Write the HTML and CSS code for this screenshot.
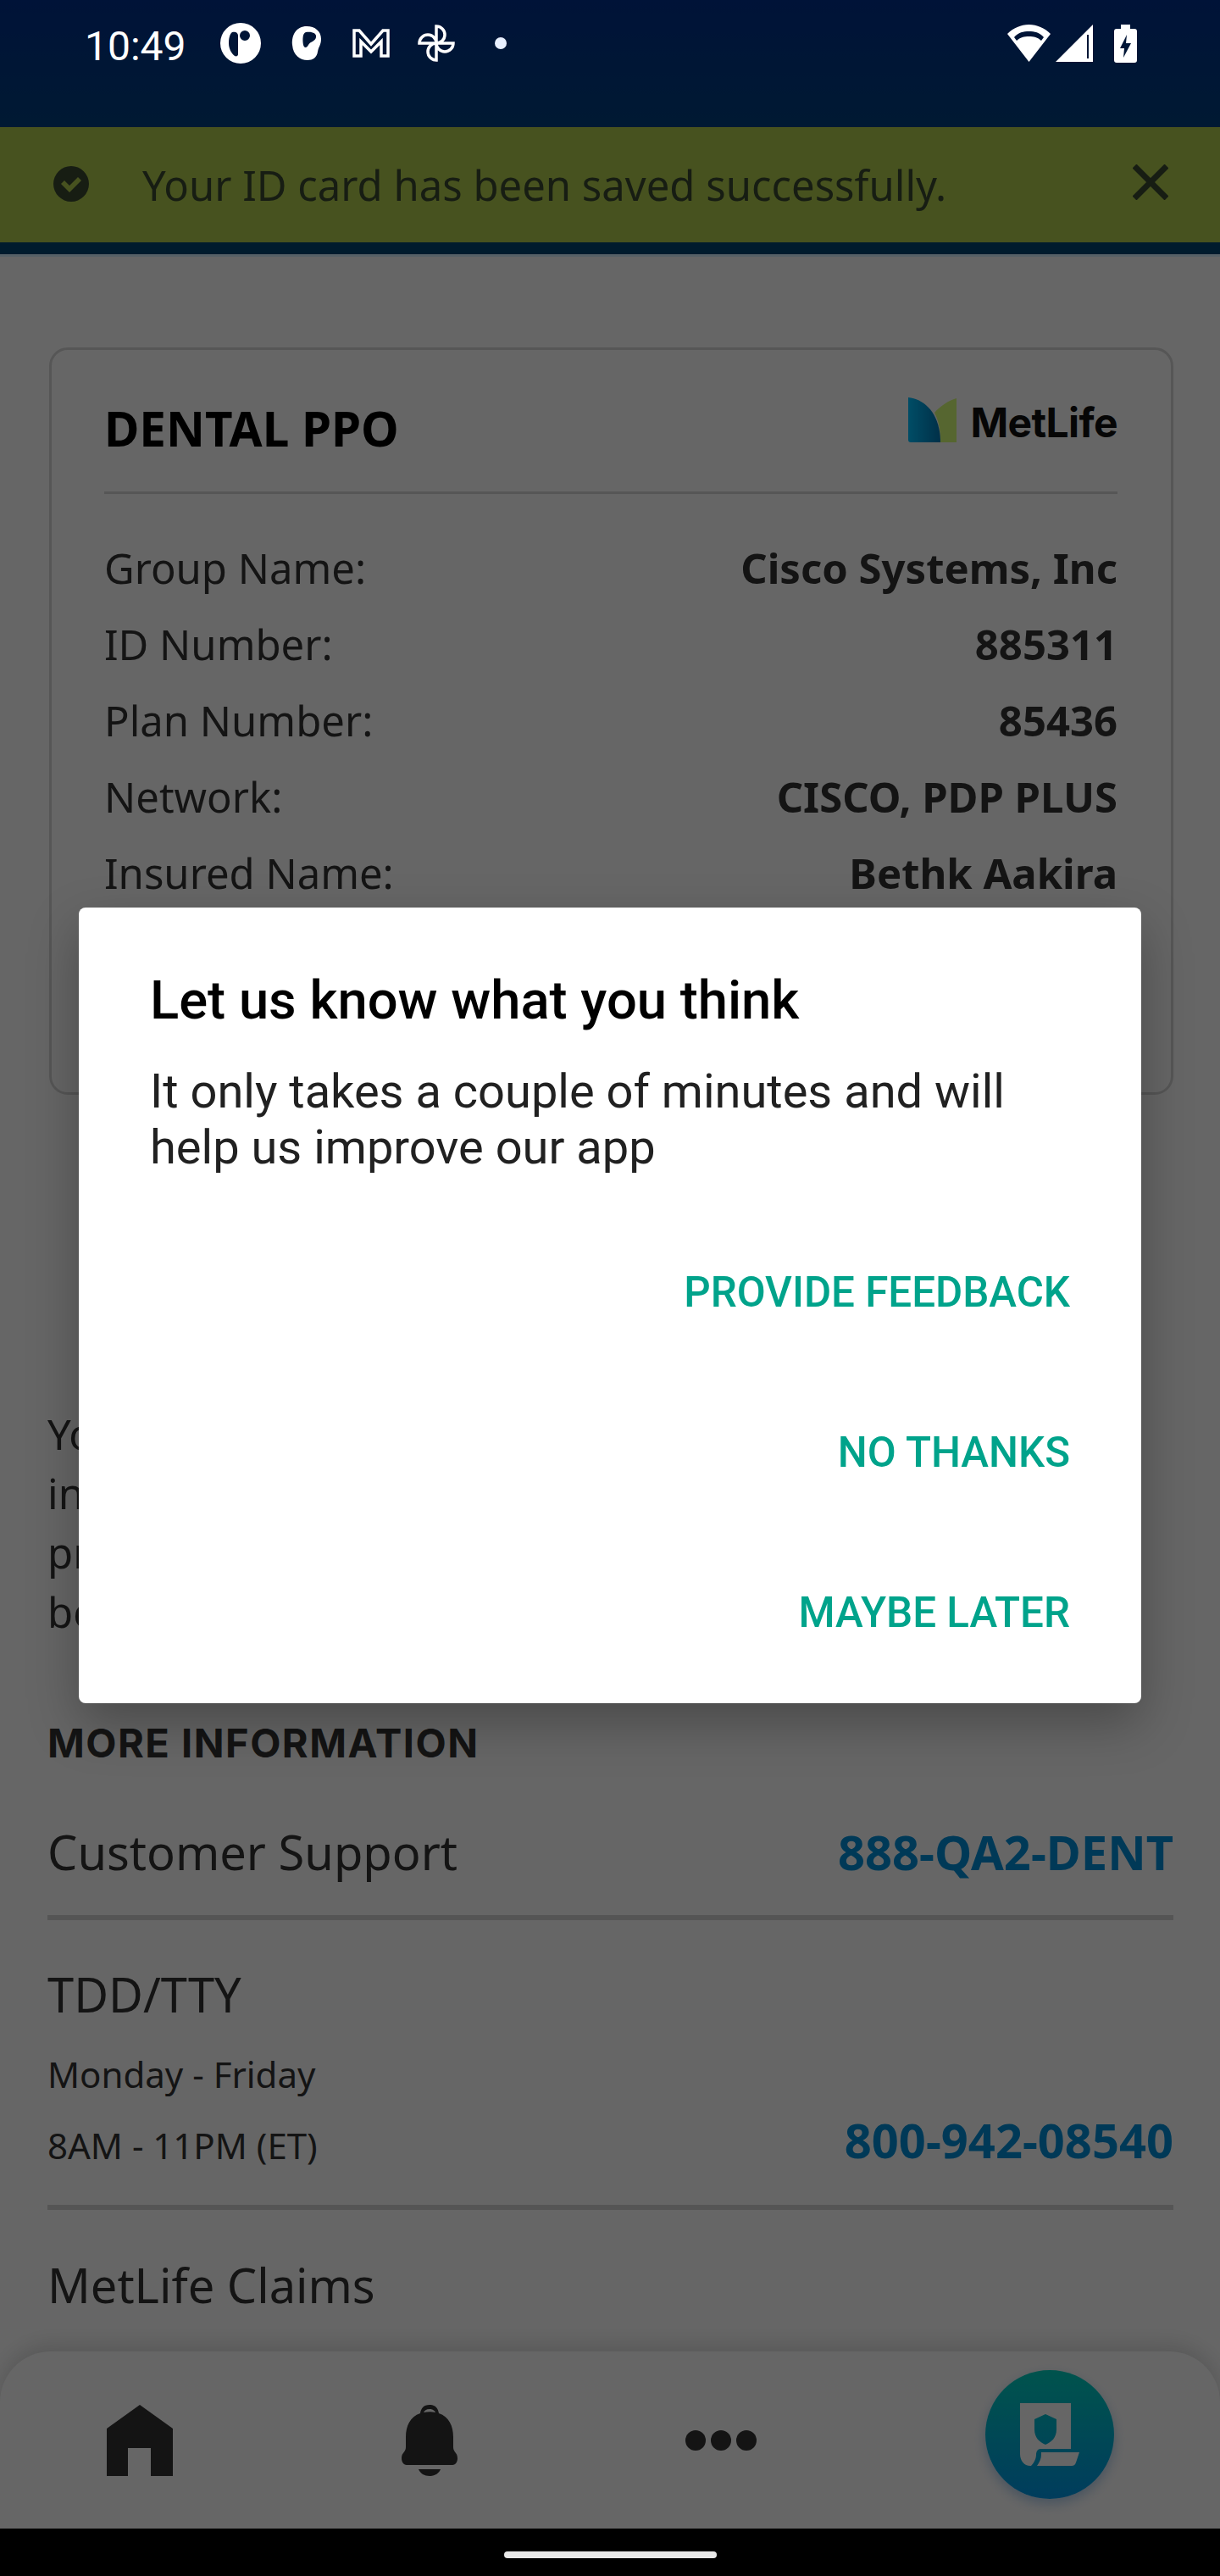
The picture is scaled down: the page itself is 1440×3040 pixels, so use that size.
FILE: index.html
```html
<!DOCTYPE html>
<html lang="en">
<head>
<meta charset="utf-8">
<title>ID card</title>
<link rel="stylesheet" href="styles.css">
</head>
<body>
<div class="phone">

	<div class="statusbar">
		<div class="statusLeft">
			<span class="clock">10:49</span>
			<svg class="appIcon" width="48" height="48" viewBox="0 0 48 48"><path fill-rule="evenodd" d="M24 0a24 24 0 1 0 0 48a24 24 0 1 0 0-48ZM14 11c3-1 7 0 7 4v22c0 2-2 3-4 2c-4-3-7-9-7-15c0-5 1-11 4-13ZM29 9a6 6 0 1 0 0 12a6 6 0 1 0 0-12Z"/></svg>
			<svg class="appIcon" width="36" height="40" viewBox="0 0 36 40"><path fill-rule="evenodd" d="M18 0C28 0 35 6 35 15C35 22 32 24 31 30C30 37 25 40 19 40C10 40 2 34 1 22C0 10 6 0 18 0ZM17 7C13 8 13 16 14 22C15 26 18 26 20 22C22 18 28 18 29 13C30 8 24 6 17 7Z"/></svg>
			<svg class="appIcon" width="44" height="34" viewBox="0 0 44 34"><path class="outline" d="M2 2H8L22 18L36 2H42V32H34V15L22 27L10 15V32H2Z"/></svg>
			<svg class="appIcon pinwheel" width="44" height="44" viewBox="0 0 44 44"><path class="outline" d="M22 22V2A10 10 0 0 1 22 22ZM22 22H42A10 10 0 0 1 22 22ZM22 22V42A10 10 0 0 1 22 22ZM22 22H2A10 10 0 0 1 22 22Z"/></svg>
			<span class="notifDot"></span>
		</div>
		<div class="statusRight">
			<svg class="appIcon" width="53" height="44" viewBox="0 0 53 44"><path fill-rule="evenodd" d="M26.5 44L1 11C8 4 17 0 26.5 0S45 4 52 11ZM9 15C14 9 20 8 26.5 8S39 9 44 15L41 19C37 15 32 14 26.5 14S16 15 12 19Z"/></svg>
			<svg class="appIcon" width="44" height="44" viewBox="0 0 44 44"><path fill-rule="evenodd" d="M44 0V44H0ZM37 12V40H39V12Z"/></svg>
			<svg class="appIcon battery" width="27" height="45" viewBox="0 0 27 45"><path fill-rule="evenodd" d="M8 0H19V5H24C26 5 27 6 27 8V42C27 44 26 45 24 45H3C1 45 0 44 0 42V8C0 6 1 5 3 5H8ZM15 12L7 28H12L11 39L20 22H14Z"/></svg>
		</div>
	</div>

	<div class="topbar"></div>

	<div class="successBanner">
		<svg class="bannerCheck" width="42" height="42" viewBox="0 0 42 42"><path fill-rule="evenodd" d="M21 0a21 21 0 1 0 0 42a21 21 0 1 0 0-42ZM9 21l4-4l6 6l10-10l4 4l-14 14Z"/></svg>
		<span class="bannerText">Your ID card has been saved successfully.</span>
		<svg class="bannerClose" width="42" height="42" viewBox="0 0 42 42"><path d="M2 2L40 40M40 2L2 40"/></svg>
	</div>
	<div class="bannerEdge"></div>

	<div class="content">
		<div class="idCard">
			<div class="idCardHead">
				<h2 class="idCardTitle">DENTAL PPO</h2>
				<div class="logo">
					<svg width="57" height="53" viewBox="0 0 57 53">
						<defs><linearGradient id="logoBlue" x1="0" y1="0" x2="1" y2="0"><stop offset="0" stop-color="#00c0ff"/><stop offset="1" stop-color="#0078b4"/></linearGradient></defs>
						<path fill="#d8ff78" d="M57 1V53H38C38 38 36 28 31 18C38 10 47 4 57 1Z"/>
						<path fill="url(#logoBlue)" d="M0 0C20 2 38 20 38 53H3Q0 53 0 50Z"/>
					</svg>
					<span class="logoText">MetLife</span>
				</div>
			</div>
			<div class="idCardRows">
				<div class="idRow"><span>Group Name:</span><b>Cisco Systems, Inc</b></div>
				<div class="idRow"><span>ID Number:</span><b>885311</b></div>
				<div class="idRow"><span>Plan Number:</span><b>85436</b></div>
				<div class="idRow"><span>Network:</span><b>CISCO, PDP PLUS</b></div>
				<div class="idRow"><span>Insured Name:</span><b>Bethk Aakira</b></div>
			</div>
		</div>

		<p class="notice">
			Your ID card is saved to your device<br>
			in case you need to show it to a<br>
			provider when you are not able to<br>
			be online at your appointment.
		</p>

		<h3 class="sectionTitle">MORE INFORMATION</h3>

		<div class="infoRow">
			<div class="infoLabel">Customer Support</div>
			<a class="phoneLink">888-QA2-DENT</a>
		</div>
		<div class="infoRow infoRowHours">
			<div>
				<div class="infoLabel">TDD/TTY</div>
				<div class="infoHours">Monday - Friday</div>
				<div class="infoHours">8AM - 11PM (ET)</div>
			</div>
			<a class="phoneLink">800-942-08540</a>
		</div>
		<div class="infoClaims">
			<div class="infoLabel">MetLife Claims</div>
			<div class="infoHours">MetLife Dental Claims</div>
		</div>
	</div>

	<div class="tabbar">
		<svg class="tabIcon" width="78" height="84" viewBox="0 0 78 84"><path d="M39 0L78 28V84H52V51H25V84H0V28Z"/></svg>
		<svg class="tabIcon" width="66" height="84" viewBox="0 0 66 84"><path fill-rule="evenodd" d="M33 0C26 0 23 4 22 10C10 14 5 25 5 38V50C5 56 0 56 0 63C0 67 2 71 6 71H60C64 71 66 67 66 63C66 56 61 56 61 50V38C61 25 56 14 44 10C43 4 40 0 33 0ZM33 5C37 5 39 7 40 9C35 8 31 8 26 9C27 7 29 5 33 5Z"/><path d="M20 76H46C44 81 39 84 33 84S22 81 20 76Z"/></svg>
		<svg class="tabIcon" width="84" height="24" viewBox="0 0 84 24"><circle cx="12" cy="12" r="12"/><circle cx="42" cy="12" r="12"/><circle cx="72" cy="12" r="12"/></svg>
		<div class="fab">
			<svg width="70" height="74" viewBox="0 0 70 74"><path fill-rule="evenodd" fill="#fff" d="M0 0H60V54H24C21 54 19 57 19 61C19 66 16 71 13 74H12C5 74 0 68 0 60ZM30 13L17 19V31C17 41 23 46 30 49C37 46 43 41 43 31V19Z"/><path fill="#fff" d="M25 58H70L66 70C65 73 63 74 61 74H20C23 70 25 65 25 61Z"/></svg>
		</div>
	</div>

	<div class="systemNav"><span class="homePill"></span></div>

	<div class="scrim"></div>

	<div class="dialog">
		<h1 class="dialogTitle">Let us know what you think</h1>
		<p class="dialogBody">It only takes a couple of minutes and will<br>help us improve our app</p>
		<div class="dialogActions">
			<a class="dialogBtn">PROVIDE FEEDBACK</a>
			<a class="dialogBtn">NO THANKS</a>
			<a class="dialogBtn">MAYBE LATER</a>
		</div>
	</div>
</div>
</body>
</html>
```

FILE: styles.css
```css
* {
	box-sizing: border-box;
}

html, body {
	margin: 0;
	padding: 0;
}

.phone {
	position: relative;
	width: 1440px;
	height: 3040px;
	overflow: hidden;
	display: flex;
	flex-direction: column;
	background-color: #fff;
	color: #333;
	font-family: "Noto Sans", sans-serif;
}

/* status bar sits above the scrim, its background is on .topbar */
.statusbar {
	position: absolute;
	top: 27px;
	left: 0;
	right: 0;
	z-index: 6;
	display: flex;
	justify-content: space-between;
	align-items: center;
	padding: 0 98px 0 100px;
	height: 48px;
	color: #fff;
}

.statusLeft {
	display: flex;
	align-items: center;
	gap: 36px;
}

.statusRight {
	display: flex;
	align-items: center;
	gap: 5px;
}

.clock {
	font-family: Roboto, sans-serif;
	font-size: 48px;
	line-height: 48px;
	margin-top: 8px;
	margin-right: 4px;
	width: 120px;
}

.appIcon {
	display: block;
	fill: #fff;
}

.outline {
	fill: none;
	stroke: #fff;
	stroke-width: 3.5;
}

.pinwheel {
	margin-left: -3px;
}

.battery {
	margin-left: 20px;
}

.notifDot {
	width: 14px;
	height: 14px;
	margin-left: 11px;
	border-radius: 50%;
	background-color: #e8f0ff;
}

.topbar {
	height: 150px;
	background: linear-gradient(#00308c, #004080);
}

.successBanner {
	height: 136px;
	display: flex;
	align-items: center;
	padding: 0 61px 0 63px;
	background-color: #b2cd4e;
}

.bannerCheck {
	fill: #3a4a30;
	margin-top: -2px;
}

.bannerText {
	margin-left: 63px;
	font-size: 49px;
	color: #3a4a30;
}

.bannerClose {
	margin-left: auto;
	margin-top: -6px;
	fill: none;
	stroke: #3a4a30;
	stroke-width: 7;
}

.bannerEdge {
	height: 17px;
	background-color: #004470;
	border-bottom: 3px solid #d8f0ff;
}

.content {
	flex: 1;
	min-height: 0;
	overflow: hidden;
	padding: 107px 55px 0 56px;
}

.idCard {
	height: 882px;
	margin-left: 2px;
	padding: 56px 63px 0 62px;
	border: 3px solid #d8d8d8;
	border-radius: 22px;
}

.idCardHead {
	display: flex;
	justify-content: space-between;
	align-items: flex-start;
	height: 114px;
	border-bottom: 3px solid #d8d8d8;
}

.idCardTitle {
	margin: 2px 0 0;
	font-size: 56.5px;
	line-height: 70px;
	font-weight: 700;
	color: #000;
}

.logo {
	display: flex;
	align-items: flex-start;
	gap: 16px;
}

.logoText {
	font-family: Inter, sans-serif;
	font-weight: 700;
	font-size: 48px;
	line-height: 53px;
	margin-top: 3px;
	letter-spacing: -0.6px;
	color: #111;
}

.idCardRows {
	padding-top: 42px;
}

.idRow {
	display: flex;
	justify-content: space-between;
	height: 90px;
	font-size: 49px;
	line-height: 90px;
}

.notice {
	margin: 365px 0 0;
	font-size: 49px;
	line-height: 70px;
}

.sectionTitle {
	margin: 90px 0 0;
	font-family: Inter, sans-serif;
	font-size: 47px;
	line-height: 60px;
	font-weight: 700;
	letter-spacing: 1.5px;
}

.infoRow {
	display: flex;
	justify-content: space-between;
	margin-top: 60px;
	padding-bottom: 37px;
	border-bottom: 6px solid #d4d4d4;
}

.infoRowHours {
	align-items: flex-end;
	margin-top: 49px;
	padding-bottom: 28px;
}

.infoRowHours .phoneLink {
	margin-bottom: 11px;
}

.infoLabel {
	font-size: 56px;
	line-height: 76px;
}

.infoHours {
	font-size: 42px;
	line-height: 84px;
}

.infoLabel + .infoHours {
	margin-top: 15px;
}

.infoClaims {
	margin-top: 50px;
}

.infoClaims .infoHours {
	margin-top: 17px;
}

.phoneLink {
	font-size: 56px;
	line-height: 76px;
	font-weight: 700;
	color: #0090da;
}

.tabbar {
	position: relative;
	height: 209px;
	display: flex;
	justify-content: space-between;
	align-items: center;
	padding: 0 125px 0 126px;
	background-color: #fff;
	border-radius: 60px 60px 0 0;
	box-shadow: 0 -8px 24px rgba(0, 0, 0, 0.14);
}

.tabIcon {
	display: block;
	fill: #333;
}

.fab {
	width: 152px;
	height: 152px;
	margin-bottom: 14px;
	display: flex;
	align-items: center;
	justify-content: center;
	border-radius: 50%;
	background: linear-gradient(#00d0c0, #0098e8);
	box-shadow: 0 6px 14px rgba(0, 100, 200, 0.3);
}

.systemNav {
	position: relative;
	z-index: 6;
	height: 56px;
	display: flex;
	justify-content: center;
	padding-top: 27px;
	background-color: #000;
}

.homePill {
	width: 251px;
	height: 8px;
	border-radius: 4px;
	background-color: #e8e8e8;
}

.scrim {
	position: absolute;
	top: 0;
	right: 0;
	bottom: 0;
	left: 0;
	z-index: 5;
	background-color: rgba(0, 0, 0, 0.6);
}

.dialog {
	position: absolute;
	top: 1071px;
	left: 93px;
	z-index: 7;
	width: 1254px;
	height: 939px;
	padding: 74px 84px 0 84px;
	border-radius: 8px;
	background-color: #fff;
	box-shadow: 0 24px 60px rgba(0, 0, 0, 0.28);
	font-family: Roboto, sans-serif;
}

.dialogTitle {
	margin: 0;
	font-size: 63.3px;
	line-height: 70px;
	font-weight: 500;
	color: #000;
}

.dialogBody {
	margin: 40px 0 0;
	font-size: 56px;
	line-height: 66px;
	font-weight: 400;
	color: #212121;
}

.dialogActions {
	margin-top: 44px;
}

.dialogBtn {
	display: block;
	height: 189px;
	font-size: 49.3px;
	line-height: 189px;
	font-weight: 500;
	text-align: right;
	color: #00a38b;
}
```
